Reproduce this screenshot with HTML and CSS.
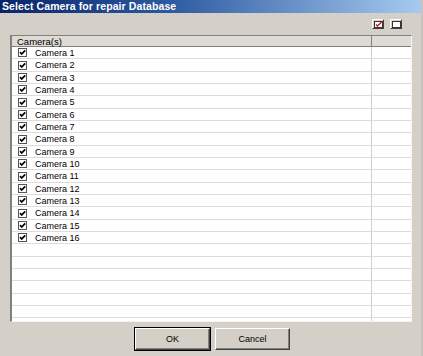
FILE: index.html
```html
<!DOCTYPE html>
<html>
<head>
    <meta charset="UTF-8">
    <title>Select Camera for repair Database</title>
    <link rel="stylesheet" href="styles.css">
</head>
<body>
<svg class="defs" width="0" height="0">
    <symbol id="chk" viewBox="0 0 9 9">
        <rect x="0.5" y="0.5" width="8" height="8" fill="#fff" stroke="#555"/>
        <path d="M2 4.2 L3.7 6 L7.2 2.3" fill="none" stroke="#000" stroke-width="1.7"/>
    </symbol>
</svg>
<div class="window">
    <div class="titlebar">Select Camera for repair Database</div>

    <div class="toolbar">
        <button class="tool" title="Select all">
            <svg width="9" height="7" viewBox="0 0 9 7">
                <rect x="0.5" y="0.5" width="8" height="6" fill="#fff" stroke="#333"/>
                <path d="M2 3.5 L3.5 5 L8 0.5" fill="none" stroke="#d01010" stroke-width="1.3"/>
            </svg>
        </button>
        <button class="tool" title="Select none">
            <svg width="9" height="7" viewBox="0 0 9 7">
                <rect x="0.5" y="0.5" width="8" height="6" fill="#fff" stroke="#333"/>
            </svg>
        </button>
    </div>

    <div class="grid">
        <div class="row head">
            <div class="cell">Camera(s)</div>
            <div class="cell"></div>
        </div>
        <div class="row"><div class="cell"><svg class="cb"><use href="#chk"/></svg>Camera 1</div><div class="cell"></div></div>
        <div class="row"><div class="cell"><svg class="cb"><use href="#chk"/></svg>Camera 2</div><div class="cell"></div></div>
        <div class="row"><div class="cell"><svg class="cb"><use href="#chk"/></svg>Camera 3</div><div class="cell"></div></div>
        <div class="row"><div class="cell"><svg class="cb"><use href="#chk"/></svg>Camera 4</div><div class="cell"></div></div>
        <div class="row"><div class="cell"><svg class="cb"><use href="#chk"/></svg>Camera 5</div><div class="cell"></div></div>
        <div class="row"><div class="cell"><svg class="cb"><use href="#chk"/></svg>Camera 6</div><div class="cell"></div></div>
        <div class="row"><div class="cell"><svg class="cb"><use href="#chk"/></svg>Camera 7</div><div class="cell"></div></div>
        <div class="row"><div class="cell"><svg class="cb"><use href="#chk"/></svg>Camera 8</div><div class="cell"></div></div>
        <div class="row"><div class="cell"><svg class="cb"><use href="#chk"/></svg>Camera 9</div><div class="cell"></div></div>
        <div class="row"><div class="cell"><svg class="cb"><use href="#chk"/></svg>Camera 10</div><div class="cell"></div></div>
        <div class="row"><div class="cell"><svg class="cb"><use href="#chk"/></svg>Camera 11</div><div class="cell"></div></div>
        <div class="row"><div class="cell"><svg class="cb"><use href="#chk"/></svg>Camera 12</div><div class="cell"></div></div>
        <div class="row"><div class="cell"><svg class="cb"><use href="#chk"/></svg>Camera 13</div><div class="cell"></div></div>
        <div class="row"><div class="cell"><svg class="cb"><use href="#chk"/></svg>Camera 14</div><div class="cell"></div></div>
        <div class="row"><div class="cell"><svg class="cb"><use href="#chk"/></svg>Camera 15</div><div class="cell"></div></div>
        <div class="row"><div class="cell"><svg class="cb"><use href="#chk"/></svg>Camera 16</div><div class="cell"></div></div>
        <div class="row"><div class="cell"></div><div class="cell"></div></div>
        <div class="row"><div class="cell"></div><div class="cell"></div></div>
        <div class="row"><div class="cell"></div><div class="cell"></div></div>
        <div class="row"><div class="cell"></div><div class="cell"></div></div>
        <div class="row"><div class="cell"></div><div class="cell"></div></div>
        <div class="row"><div class="cell"></div><div class="cell"></div></div>
        <div class="row"><div class="cell"></div><div class="cell"></div></div>
    </div>

    <div class="buttons">
        <button class="btn default">OK</button>
        <button class="btn">Cancel</button>
    </div>
</div>
</body>
</html>
```

FILE: styles.css
```css
body {
    margin: 0;
    padding: 0;
    background-color: #d4d0c8;
    font-family: "Liberation Sans", Arial, sans-serif;
}

.defs {
    position: absolute;
}

.window {
    width: 423px;
    height: 356px;
    background-color: #d4d0c8;
    box-sizing: border-box;
    border-right: 2px solid #c8c4bc;
    display: flex;
    flex-direction: column;
}

.titlebar {
    height: 13px;
    line-height: 13px;
    padding-left: 2px;
    color: #fff;
    font-weight: bold;
    font-size: 10.5px;
    letter-spacing: 0.1px;
    background: linear-gradient(to right, #0a246a 0%, #2d5aa0 40%, #a6caf0 100%);
}

.toolbar {
    display: flex;
    justify-content: flex-end;
    gap: 6px;
    height: 22px;
    box-sizing: border-box;
    padding: 6px 19px 0 0;
}

.tool {
    width: 12px;
    height: 10px;
    padding: 0;
    margin: 0;
    display: flex;
    align-items: center;
    justify-content: center;
    background-color: #d4d0c8;
    border: 1px solid;
    border-color: #fff #404040 #404040 #fff;
}

.tool svg {
    display: block;
}

.grid {
    margin: 0 9px 0 10px;
    height: 287px;
    overflow: hidden;
    background-color: #fff;
    border-left: 2px solid #808080;
    border-top: 1px solid #808080;
    border-right: 1px solid #f4f4f4;
    border-bottom: 1px solid #f4f4f4;
    box-sizing: border-box;
}

.row {
    display: grid;
    grid-template-columns: 1fr 40px;
    height: 12px;
    border-bottom: 1px solid #dcdcdc;
    box-sizing: border-box;
    font-size: 9px;
    color: #000;
}

.row:nth-child(3n) {
    height: 13px;
}

.cell {
    display: flex;
    align-items: center;
    padding-left: 6px;
    white-space: nowrap;
}

.cell + .cell {
    border-left: 1px solid #d0d0d0;
}

.row.head {
    height: 11px;
    background-color: #dedbd4;
    border-bottom: 1px solid #808080;
}

.row.head .cell {
    padding-left: 5px;
    font-size: 9.5px;
}

.row.head .cell + .cell {
    border-left: 1px solid #808080;
}

.cb {
    width: 9px;
    height: 9px;
    margin-right: 8px;
    flex: none;
}

.buttons {
    display: flex;
    justify-content: center;
    gap: 5px;
    padding: 6px 0 0 4px;
}

.btn {
    width: 75px;
    height: 22px;
    padding: 0;
    font-family: "Liberation Sans", Arial, sans-serif;
    font-size: 9px;
    color: #000;
    background-color: #d4d0c8;
    border: 1px solid;
    border-color: #fff #404040 #404040 #fff;
    box-shadow: inset -1px -1px 0 #808080;
}

.btn.default {
    outline: 1px solid #000;
    outline-offset: 0;
}
```
